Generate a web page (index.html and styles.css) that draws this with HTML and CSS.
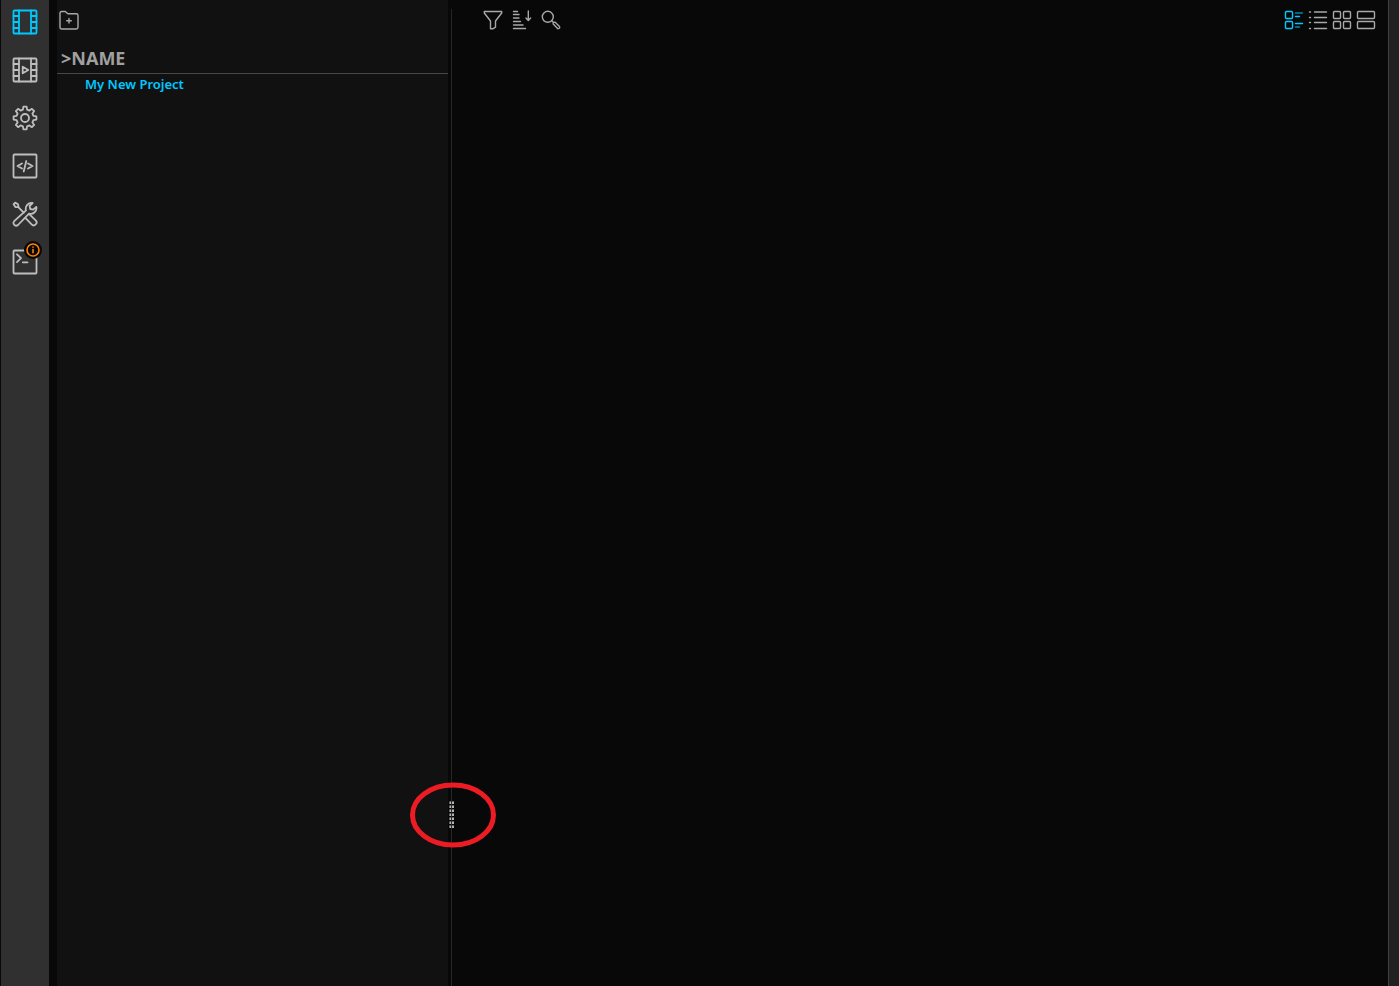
FILE: index.html
```html
<!DOCTYPE html>
<html lang="en">
<head>
  <meta charset="UTF-8" />
  <meta name="viewport" content="width=device-width, initial-scale=1" />
  <title>Projects</title>
  <link rel="stylesheet" href="styles.css">
</head>
<body>
  <div class="app">

    <!-- SIDEBAR -->
    <nav class="sidebar">
      <a href="#media" class="nav-item active" aria-label="Media">
        <svg viewBox="0 0 26 26">
          <rect x="1.5" y="1.5" width="23" height="23" rx="1" />
          <path d="M7 1.5v23M19 1.5v23M1.5 7H7M1.5 13H7M1.5 19H7M19 7h5.5M19 13h5.5M19 19h5.5" />
        </svg>
      </a>
      <a href="#player" class="nav-item" aria-label="Player">
        <svg viewBox="0 0 26 26">
          <rect x="1.5" y="1.5" width="23" height="23" rx="1" />
          <path d="M7 1.5v23M19 1.5v23M1.5 7H7M1.5 13H7M1.5 19H7M19 7h5.5M19 13h5.5M19 19h5.5" />
          <path d="M10.7 9.7v6.6l5.6-3.3z" />
        </svg>
      </a>
      <a href="#settings" class="nav-item" aria-label="Settings">
        <svg viewBox="-13 -13 26 26">
          <path d="M-2.1-8.4L-1.6-11.4L1.6-11.4L2.1-8.4L4.45-7.42L6.93-9.19L9.19-6.93L7.42-4.45L8.4-2.1L11.4-1.6L11.4 1.6L8.4 2.1L7.42 4.45L9.19 6.93L6.93 9.19L4.45 7.42L2.1 8.4L1.6 11.4L-1.6 11.4L-2.1 8.4L-4.45 7.42L-6.93 9.19L-9.19 6.93L-7.42 4.45L-8.4 2.1L-11.4 1.6L-11.4-1.6L-8.4-2.1L-7.42-4.45L-9.19-6.93L-6.93-9.19L-4.45-7.42z" />
          <circle r="4" />
        </svg>
      </a>
      <a href="#code" class="nav-item" aria-label="Code">
        <svg viewBox="0 0 26 26">
          <rect x="1.5" y="1.5" width="23" height="23" rx="1" />
          <path d="M10 10.5L5.5 13l4.5 2.5M16 10.5l4.5 2.5-4.5 2.5M14.3 8l-2.6 10.5" />
        </svg>
      </a>
      <a href="#tools" class="nav-item" aria-label="Tools">
        <svg viewBox="0 0 26 26">
          <path d="M1.6 3.2L3.2 1.6 6 3.2 6.5 6.2 3.4 6z" />
          <path d="M6 5.8l5.8 5.8" />
          <path d="M13.6 17.2l6 6.2a2.8 2.8 0 0 0 4.1-4l-6.2-6" />
          <path d="M20.6 2a5.8 5.8 0 0 0-6.6 7.4L2.2 20.2a2.7 2.7 0 0 0 3.8 3.8L17 12.6a5.8 5.8 0 0 0 7.3-6.8L21.2 8.6l-3-.6-.6-3z" />
        </svg>
      </a>
      <a href="#console" class="nav-item" aria-label="Console">
        <svg viewBox="0 0 26 26">
          <rect x="1.5" y="1.5" width="23" height="23" rx="1" />
          <path d="M5 5.3L9 9.2 5 13.1M10.8 13.3h4.7" />
        </svg>
        <span class="badge">
          <svg viewBox="0 0 18 18">
            <circle cx="9" cy="9" r="6" />
            <path d="M9 8.5v3.3M9 6v.2" />
          </svg>
        </span>
      </a>
    </nav>

    <div class="workspace">

      <!-- PROJECT TREE -->
      <aside class="tree">
        <div class="toolbar tree-toolbar">
          <button type="button" aria-label="New folder">
            <svg viewBox="0 0 20 20">
              <path d="M1 3.2Q1 1.5 2.7 1.5H6.3L8.8 3.7H17.3Q19 3.7 19 5.4V17.3Q19 19 17.3 19H2.7Q1 19 1 17.3z" />
              <path d="M10 8.5v4.5M7.7 10.7h4.6" />
            </svg>
          </button>
        </div>
        <h1 class="tree-heading">&gt;NAME</h1>
        <ul class="tree-list">
          <li><a href="#project">My New Project</a></li>
        </ul>
      </aside>

      <!-- SPLITTER -->
      <div class="splitter">
        <div class="grip">
          <svg class="grip-ring" viewBox="0 0 88 66">
            <ellipse cx="44" cy="33" rx="40.5" ry="30" />
          </svg>
          <div class="grip-dots"></div>
        </div>
      </div>

      <!-- CONTENT -->
      <main class="content">
        <div class="toolbar">
          <div class="tools">
            <button type="button" aria-label="Filter">
              <svg viewBox="0 0 20 20">
                <path d="M1.3 1.5H18.7V3L12.5 11V17.2L9.8 18.8H7.5V11L1.3 3z" />
              </svg>
            </button>
            <button type="button" aria-label="Sort">
              <svg viewBox="0 0 20 20">
                <path d="M1.5 1.5h4M1.5 4.5H7M1.5 8H7M1.5 11.5h7M1.5 15H11M1.5 18.5h12M16.3 1v9.5M14 8l2.3 2.5L18.6 8" />
              </svg>
            </button>
            <button type="button" aria-label="Search">
              <svg viewBox="0 0 20 20">
                <circle cx="6.8" cy="6.8" r="5.5" />
                <path d="M10.8 10.8l1.7 1.7M12.2 14q-.2-1.9 1.7-1.9l4.6 4.5q.8 2-1.6 2.1z" />
              </svg>
            </button>
          </div>
          <div class="views">
            <button type="button" class="active" aria-label="Detail view">
              <svg viewBox="0 0 20 20">
                <rect x="1.5" y="1.5" width="7" height="7" rx="1" />
                <rect x="1.5" y="11.5" width="7" height="7" rx="1" />
                <path class="dim" d="M11.5 3h7M11.5 17h4" />
                <path d="M11.5 6.5h4M11.5 13.5h7" />
              </svg>
            </button>
            <button type="button" aria-label="List view">
              <svg viewBox="0 0 20 20">
                <path d="M1.5 2h1M1.5 7.5h1M1.5 12.5h1M1.5 18.5h1M6.5 2h12M6.5 7.5h12M6.5 12.5h12M6.5 18.5h12" />
              </svg>
            </button>
            <button type="button" aria-label="Grid view">
              <svg viewBox="0 0 20 20">
                <rect x="1.5" y="1.5" width="7" height="7" rx="1" />
                <rect x="11.5" y="1.5" width="7" height="7" rx="1" />
                <rect x="1.5" y="11.5" width="7" height="7" rx="1" />
                <rect x="11.5" y="11.5" width="7" height="7" rx="1" />
              </svg>
            </button>
            <button type="button" aria-label="Row view">
              <svg viewBox="0 0 20 20">
                <rect x="1.5" y="1.5" width="17" height="7" rx="1" />
                <rect x="1.5" y="11.5" width="17" height="7" rx="1" />
              </svg>
            </button>
          </div>
        </div>
      </main>
    </div>

    <div class="edge"></div>
  </div>
</body>
</html>
```
FILE: styles.css
```css
/* Reset and base */
* {
  box-sizing: border-box;
  margin: 0;
  padding: 0;
}

body {
  font-family: "Noto Sans", "Open Sans", sans-serif;
  background-color: #080808;
  color: #a0a0a0;
  overflow: hidden;
}

svg {
  display: block;
  width: 100%;
  height: 100%;
  fill: none;
  stroke: currentColor;
  stroke-linecap: round;
  stroke-linejoin: round;
}

.app {
  display: flex;
  height: 100vh;
}

/* Sidebar */
.sidebar {
  display: flex;
  flex-direction: column;
  gap: 4px;
  flex: none;
  width: 49px;
  background-color: #303030;
  border-left: 1px solid #080808;
}

.nav-item {
  position: relative;
  display: flex;
  align-items: center;
  justify-content: center;
  height: 44px;
  color: #bebebe;
}

.nav-item > svg {
  width: 26px;
  height: 26px;
  stroke-width: 1.8;
}

.nav-item.active {
  color: #00c8ff;
}

.badge {
  position: absolute;
  top: 1px;
  right: 7px;
  width: 18px;
  height: 18px;
  border-radius: 50%;
  background-color: #080808;
  color: #ff8000;
}

.badge svg {
  stroke-width: 1.6;
}

/* Workspace */
.workspace {
  display: flex;
  flex: 1;
  padding-left: 8px;
}

.tree {
  width: 29.4%;
  background-color: #111;
}

.toolbar {
  display: flex;
  align-items: center;
  justify-content: space-between;
  height: 40px;
  padding: 0 12px 0 31px;
}

.tree-toolbar {
  padding: 0 2px;
}

.toolbar button {
  width: 20px;
  height: 20px;
  border: none;
  background: none;
  color: #a8a8a8;
  cursor: pointer;
}

.toolbar button.active {
  color: #00c8ff;
}

.toolbar svg {
  stroke-width: 1.4;
}

.tools {
  display: flex;
  gap: 9px;
}

.views {
  display: flex;
  gap: 4px;
}

.dim {
  opacity: 0.65;
}

.tree-heading {
  height: 34px;
  padding: 2px 4px 0;
  border-bottom: 1px solid #484848;
  font-size: 18px;
  font-weight: 700;
  line-height: 32px;
}

.tree-list {
  list-style: none;
  padding-left: 28px;
  font-size: 13px;
  font-weight: 600;
  line-height: 20px;
}

.tree-list a {
  color: #00c8ff;
  text-decoration: none;
}

/* Splitter */
.splitter {
  position: relative;
  flex: none;
  width: 4px;
  cursor: col-resize;
}

.splitter::before {
  content: "";
  display: block;
  width: 1px;
  height: calc(100% - 9px);
  margin: 9px 0 0 3px;
  background-color: #262626;
}

.grip {
  position: absolute;
  bottom: 138px;
  left: -39px;
  width: 88px;
  height: 66px;
}

.grip-ring {
  stroke: #ed1c24;
  stroke-width: 5;
}

.grip-dots {
  position: absolute;
  top: 19px;
  left: 40px;
  width: 5px;
  height: 27px;
  background: linear-gradient(to right, #6a6a6a 0 1px, #b4b4b4 1px 2px, #303030 2px 3px, #b4b4b4 3px);
  -webkit-mask: repeating-linear-gradient(#0008 0 1px, #000 1px 3px, transparent 3px 4px);
  mask: repeating-linear-gradient(#0008 0 1px, #000 1px 3px, transparent 3px 4px);
}

.content {
  flex: 1;
}

/* Right edge */
.edge {
  flex: none;
  width: 11px;
  background-color: #212121;
  border-left: 1px solid #404040;
}
```
